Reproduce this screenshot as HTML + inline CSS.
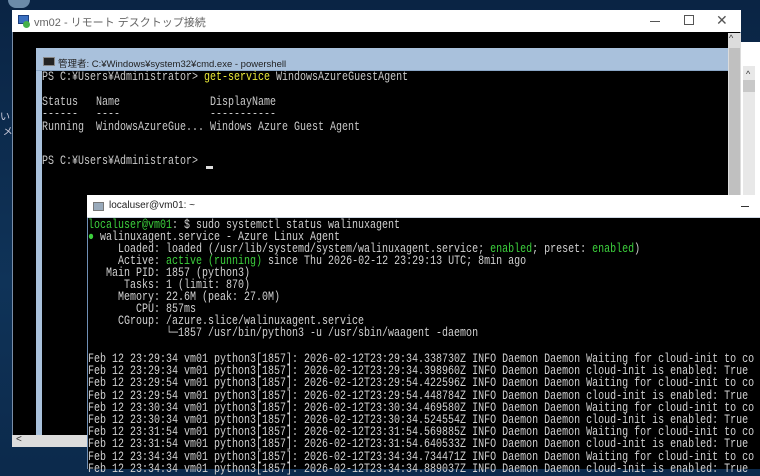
<!DOCTYPE html>
<html><head><meta charset="utf-8"><style>
*{margin:0;padding:0;box-sizing:border-box}
body{width:760px;height:469px;overflow:hidden;background:#0c2a4c;position:relative;font-family:"Liberation Sans","Noto Sans CJK JP",sans-serif}
.a{position:absolute}
.m{font-family:"Liberation Mono","Noto Sans CJK JP",monospace;font-size:12.5px;letter-spacing:0;white-space:pre;line-height:12px;transform:scaleX(0.8);transform-origin:0 0}
.c{color:#c8c8c8}
.y{color:#e8e838}
.g{color:#3ccf3c}
.p{color:#d0d0d0}
</style></head><body>
<div class="a" style="left:0;top:0;width:760px;height:469px;background:linear-gradient(180deg,#0a2444 0%,#0f3358 60%,#0c2a4c 100%)"></div>
<div class="a" style="left:8px;top:0;width:22px;height:8px;background:#6b8aa8;border-radius:0 0 8px 8px"></div>
<div class="a" style="left:0;top:108px;color:#ccd;font-size:10px">い<br>&nbsp;メ</div>
<!-- RDP window -->
<div class="a" style="left:12px;top:10px;width:729px;height:437px;background:#000;border:1px solid #7a8ea8"></div>
<div class="a" style="left:12px;top:10px;width:729px;height:22px;background:#fff"></div>
<div class="a" style="left:18px;top:15px;width:11px;height:9px;background:#3a6fc0;border:1px solid #1a3f80"></div>
<div class="a" style="left:23px;top:21px;width:7px;height:7px;background:#46b04a;border-radius:50%"></div>
<div class="a" style="left:34px;top:14px;font-size:11px;color:#666">vm02 - リモート デスクトップ接続</div>
<div class="a" style="left:650px;top:21px;width:10px;height:1px;background:#555"></div>
<div class="a" style="left:684px;top:15px;width:10px;height:10px;border:1px solid #555"></div>
<div class="a" style="left:716px;top:12px;font-size:14px;color:#555">✕</div>
<!-- cmd window -->
<div class="a" style="left:36px;top:48px;width:692px;height:387px;background:#000;border-left:6px solid #a9c1dc"></div>
<div class="a" style="left:36px;top:48px;width:692px;height:23px;background:#a9c1dc;border-bottom:1px solid #8aa6c6"></div>
<div class="a" style="left:43px;top:57px;width:12px;height:9px;background:#222;border:1px solid #888"></div>
<div class="a" style="left:58px;top:56px;font-size:9.5px;color:#222">管理者: C:¥Windows¥system32¥cmd.exe - powershell</div>
<div class="a m c" style="left:42px;top:71px">PS C:¥Users¥Administrator&gt; <span class="y">get-service</span> WindowsAzureGuestAgent</div>
<div class="a m c" style="left:42px;top:96px">Status   Name               DisplayName</div>
<div class="a m c" style="left:42px;top:108px">------   ----               -----------</div>
<div class="a m c" style="left:42px;top:121px">Running  WindowsAzureGue... Windows Azure Guest Agent</div>
<div class="a m c" style="left:42px;top:155px">PS C:¥Users¥Administrator&gt; </div>
<div class="a" style="left:206px;top:166px;width:7px;height:3px;background:#ddd"></div>
<!-- RDP vertical scrollbar -->
<div class="a" style="left:728px;top:33px;width:13px;height:414px;background:#dcdcdc"></div>
<div class="a" style="left:729px;top:33px;font-size:9px;color:#333">^</div>
<div class="a" style="left:729px;top:48px;width:11px;height:148px;background:#c0c0c0"></div>
<!-- right strip -->
<div class="a" style="left:741px;top:42px;width:19px;height:153px;background:#fff"></div>
<div class="a" style="left:743px;top:66px;width:12px;height:130px;background:#e8e8e8"></div>
<div class="a" style="left:746px;top:69px;font-size:9px;color:#333">^</div>
<div class="a" style="left:743px;top:80px;width:12px;height:12px;background:#c8c8c8"></div>
<!-- horizontal scrollbar -->
<div class="a" style="left:12px;top:435px;width:76px;height:12px;background:#dcdcdc"></div>
<div class="a" style="left:16px;top:434px;font-size:10px;color:#333">&lt;</div>
<!-- putty -->
<div class="a" style="left:87px;top:195px;width:673px;height:274px;background:#000;border-left:1px solid #6f8fb5"></div>
<div class="a" style="left:87px;top:195px;width:673px;height:23px;background:#fff;border-bottom:1px solid #cfd8e4"></div>
<div class="a" style="left:93px;top:202px;width:11px;height:9px;background:#9ab;border:1px solid #777"></div>
<div class="a" style="left:109px;top:200px;font-size:10px;color:#222">localuser@vm01: ~</div>
<div class="a" style="left:741px;top:206px;width:8px;height:1px;background:#333"></div>
<div class="a m p" style="left:88px;top:219px"><span class="g">localuser@vm01</span>: $ sudo systemctl status walinuxagent
<span class="g">●</span> walinuxagent.service - Azure Linux Agent
     Loaded: loaded (/usr/lib/systemd/system/walinuxagent.service; <span class="g">enabled</span>; preset: <span class="g">enabled</span>)
     Active: <span class="g">active (running)</span> since Thu 2026-02-12 23:29:13 UTC; 8min ago
   Main PID: 1857 (python3)
      Tasks: 1 (limit: 870)
     Memory: 22.6M (peak: 27.0M)
        CPU: 857ms
     CGroup: /azure.slice/walinuxagent.service
             └─1857 /usr/bin/python3 -u /usr/sbin/waagent -daemon</div>
<div class="a m p" style="left:88px;top:353px;line-height:12.2px">Feb 12 23:29:34 vm01 python3[1857]: 2026-02-12T23:29:34.338730Z INFO Daemon Daemon Waiting for cloud-init to co
Feb 12 23:29:34 vm01 python3[1857]: 2026-02-12T23:29:34.398960Z INFO Daemon Daemon cloud-init is enabled: True
Feb 12 23:29:54 vm01 python3[1857]: 2026-02-12T23:29:54.422596Z INFO Daemon Daemon Waiting for cloud-init to co
Feb 12 23:29:54 vm01 python3[1857]: 2026-02-12T23:29:54.448784Z INFO Daemon Daemon cloud-init is enabled: True
Feb 12 23:30:34 vm01 python3[1857]: 2026-02-12T23:30:34.469580Z INFO Daemon Daemon Waiting for cloud-init to co
Feb 12 23:30:34 vm01 python3[1857]: 2026-02-12T23:30:34.524554Z INFO Daemon Daemon cloud-init is enabled: True
Feb 12 23:31:54 vm01 python3[1857]: 2026-02-12T23:31:54.569885Z INFO Daemon Daemon Waiting for cloud-init to co
Feb 12 23:31:54 vm01 python3[1857]: 2026-02-12T23:31:54.640533Z INFO Daemon Daemon cloud-init is enabled: True
Feb 12 23:34:34 vm01 python3[1857]: 2026-02-12T23:34:34.734471Z INFO Daemon Daemon Waiting for cloud-init to co
Feb 12 23:34:34 vm01 python3[1857]: 2026-02-12T23:34:34.889037Z INFO Daemon Daemon cloud-init is enabled: True</div>
</body></html>
